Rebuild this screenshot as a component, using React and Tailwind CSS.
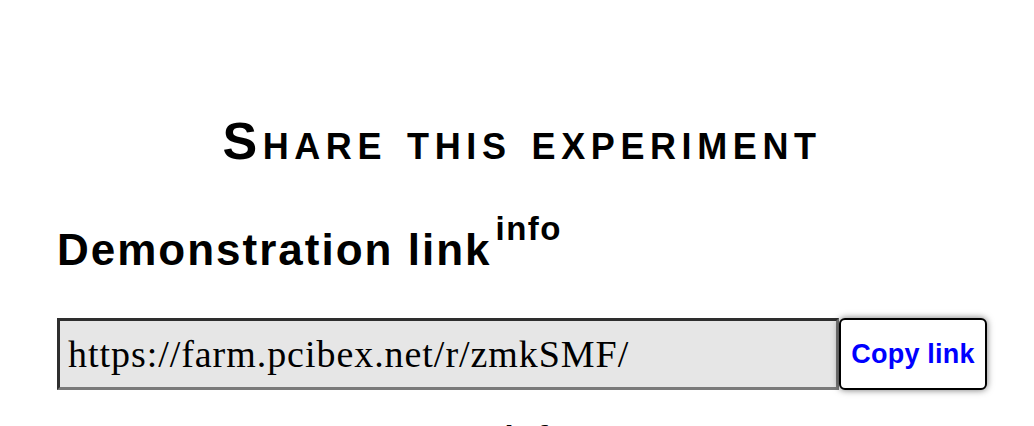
import React from 'react';

const LinkRow = ({ url }) => (
    <div className="flex items-stretch h-[72px]">
        <div className="flex-1 flex items-center bg-[#e6e6e6] border-[3px] border-t-[#2e2e2e] border-l-[#2e2e2e] border-b-[#7a7a7a] border-r-[#7a7a7a] pl-[8px]">
            <span className="text-[38px] leading-none tracking-[0.95px] text-black" style={{ fontFamily: '"Liberation Serif", serif' }}>{url}</span>
        </div>
        <button className="w-[148px] bg-white border-2 border-black rounded-[6px] shadow-[0_0_7px_rgba(0,0,0,0.55)] text-[#0000ff] font-bold text-[27px] tracking-[0.2px]">
            Copy link
        </button>
    </div>
);

const SectionTitle = ({ children }) => (
    <h2 className="font-bold text-[44px] leading-[44px] tracking-[2px] text-black">
        {children}
        <sup className="text-[33px] tracking-[1.5px] ml-[4px] top-[-25px]">info</sup>
    </h2>
);

export default function App() {
    return (
        <div className="w-[1034px] h-[426px] overflow-hidden bg-white" style={{ fontFamily: '"Liberation Sans", Arial, sans-serif' }}>
            <div className="ml-[57px] w-[930px] pt-[115px]">
                <h1 className="text-center font-bold text-[52px] leading-[52px] tracking-[5.6px] text-black" style={{ fontVariant: 'small-caps' }}>
                    Share this experiment
                </h1>
                <div className="mt-[61px]">
                    <SectionTitle>Demonstration link</SectionTitle>
                </div>
                <div className="mt-[46px]">
                    <LinkRow url="https://farm.pcibex.net/r/zmkSMF/" />
                </div>
                <div className="mt-[47px]">
                    <SectionTitle>Data-collection link</SectionTitle>
                </div>
            </div>
        </div>
    );
}
